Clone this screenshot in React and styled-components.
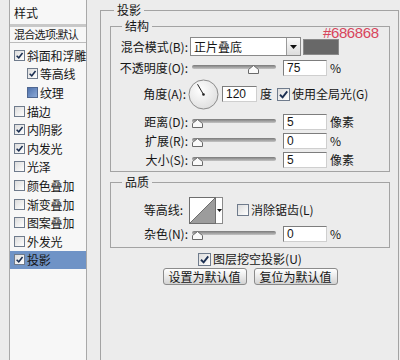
import React from 'react';
import styled, { createGlobalStyle } from 'styled-components';

const GlobalStyle = createGlobalStyle`
  html, body { margin: 0; padding: 0; }
  body {
    background: #ececec;
    font-family: "Noto Sans CJK SC", "Liberation Sans", sans-serif;
    font-size: 12px;
    color: #161616;
  }
`;

const Window = styled.div`
  display: flex;
  width: 400px;
  height: 360px;
  overflow: hidden;
  background: #ececec;
`;

/* ---------- left list ---------- */

const StylePanel = styled.div`
  width: 76px;
  margin-left: 9px;
  flex-shrink: 0;
  background: #f7f7f7;
  border-left: 1px solid #a9a9a9;
  border-right: 1px solid #a9a9a9;
`;

const PanelHeader = styled.div`
  height: 24px;
  line-height: 26px;
  padding-left: 4px;
`;

const HeaderRule = styled.div`
  height: 3px;
  background: #c8c8c8;
`;

const BlendDefault = styled.div`
  height: 15px;
  line-height: 15px;
  padding-left: 4px;
  font-size: 11px;
  letter-spacing: -0.7px;
  white-space: nowrap;
  overflow: hidden;
  border-bottom: 1px solid #bcbcbc;
`;

const StyleList = styled.div`
  padding-top: 3px;
`;

const StyleItem = styled.div`
  display: flex;
  align-items: center;
  gap: 2px;
  height: 18.6px;
  padding-left: ${p => (p.indent ? 17 : 4)}px;
  white-space: nowrap;
  letter-spacing: -0.2px;
  background: ${p => (p.selected ? '#6f93c6' : 'transparent')};
`;

/* ---------- shared bits ---------- */

const Box = styled.span`
  display: inline-flex;
  align-items: center;
  justify-content: center;
  box-sizing: border-box;
  width: ${p => p.size}px;
  height: ${p => p.size}px;
  flex-shrink: 0;
  border: 1px solid ${p => (p.tone ? '#4f6791' : '#6f7b8c')};
  background: ${p =>
    p.tone
      ? 'linear-gradient(135deg, #4f72ad, #8aa8d6)'
      : 'linear-gradient(135deg, #dcdcdc, #ffffff)'};
`;

const CheckBox = ({ checked, tone, size = 11 }) => (
  <Box size={size} tone={tone}>
    {checked && (
      <svg width={size - 2} height={size - 2} viewBox="0 0 10 10">
        <path d="M1.8 5.2 L4.2 7.6 L8.4 2.2" fill="none" stroke="#1b2f52" strokeWidth="1.7" />
      </svg>
    )}
  </Box>
);

/* ---------- right side ---------- */

const Main = styled.div`
  flex: 1;
  margin-left: 13px;
  margin-right: 1px;
  height: 360px;
  overflow: hidden;
`;

const OuterGroup = styled.fieldset`
  margin: 3px 0 0;
  padding: 0 8px 0 9px;
  height: 400px;
  min-width: 0;
  box-sizing: border-box;
  border: 1px solid #a3a3a3;
`;

const Group = styled.fieldset`
  margin: ${p => p.mt || 0}px 0 0;
  padding: 0 0 ${p => p.pb || 3}px;
  min-width: 0;
  border: 1px solid #a3a3a3;
`;

const Legend = styled.legend`
  margin-left: ${p => p.ml}px;
  margin-bottom: ${p => p.mb || 0}px;
  padding: 0 3px;
  line-height: 14px;
  font-size: 12px;
`;

const Row = styled.div`
  display: flex;
  align-items: center;
  height: ${p => p.h}px;
  margin-top: ${p => p.mt || 0}px;
  justify-content: ${p => (p.center ? 'center' : 'flex-start')};
  gap: ${p => p.gap || 0}px;
`;

const Label = styled.span`
  width: ${p => p.w || 79}px;
  padding-right: ${p => p.pr || 2}px;
  box-sizing: border-box;
  text-align: right;
  white-space: nowrap;
  line-height: 14px;
  flex-shrink: 0;
`;

const SelectField = styled.div`
  display: flex;
  width: 111px;
  height: 19px;
  box-sizing: border-box;
  border: 1px solid #8a8a8a;
  background: #fff;
`;

const SelectText = styled.span`
  flex: 1;
  padding-left: 3px;
  line-height: 17px;
`;

const SelectArrow = styled.span`
  width: 13px;
  display: flex;
  align-items: center;
  justify-content: center;
  border-left: 1px solid #9a9a9a;
  background: linear-gradient(#fbfbfb, #dcdcdc);
`;

const Swatch = styled.div`
  position: relative;
  width: 36px;
  height: 16px;
  margin-left: 2px;
  box-sizing: border-box;
  background: #686868;
  border: 1px solid #8a8a8a;
`;

const HexNote = styled.span`
  position: absolute;
  left: 19px;
  top: -15px;
  font-family: "Liberation Sans", sans-serif;
  font-size: 15px;
  line-height: 15px;
  letter-spacing: -0.4px;
  color: #d8465c;
  white-space: nowrap;
`;

const SliderWrap = styled.div`
  position: relative;
  width: 84px;
  height: 14px;
  margin-left: 2px;
  flex-shrink: 0;
`;

const Track = styled.div`
  position: absolute;
  left: 0;
  right: 0;
  top: 4px;
  height: 4px;
  border-radius: 2px;
  background: linear-gradient(#7a7a7a, #c4c4c4);
`;

const Thumb = styled.svg`
  position: absolute;
  top: 4px;
`;

const Slider = ({ value }) => (
  <SliderWrap>
    <Track />
    <Thumb width="11" height="9" viewBox="0 0 11 9" style={{ left: value * 74 }}>
      <path d="M5.5 0.5 L10.5 4.5 L10.5 8.5 L0.5 8.5 L0.5 4.5 Z" fill="#fafafa" stroke="#6a6a6a" />
    </Thumb>
  </SliderWrap>
);

const NumBox = styled.div`
  width: ${p => p.w || 44}px;
  height: 16px;
  margin-left: ${p => p.ml ?? 7}px;
  box-sizing: border-box;
  padding-left: 3px;
  background: #fff;
  border: 1px solid;
  border-color: #7d7d7d #cfcfcf #cfcfcf #7d7d7d;
  font-family: "Liberation Sans", sans-serif;
  font-size: 12px;
  line-height: 14px;
  flex-shrink: 0;
`;

const Unit = styled.span`
  margin-left: ${p => p.ml ?? 3}px;
  white-space: nowrap;
  line-height: 14px;
`;

const Dial = styled.svg`
  flex-shrink: 0;
`;

const ContourPicker = styled.div`
  display: flex;
`;

const ContourPreview = styled.div`
  width: 27px;
  height: 27px;
  box-sizing: border-box;
  border: 1px solid #6e6e6e;
  background: #fff;
`;

const ContourArrow = styled.div`
  width: 7px;
  height: 27px;
  box-sizing: border-box;
  border: 1px solid #8a8a8a;
  border-left: none;
  background: #fff;
  display: flex;
  align-items: center;
  justify-content: center;
`;

const CheckLabel = styled.label`
  display: flex;
  align-items: center;
  gap: 2px;
  margin-left: ${p => p.ml || 0}px;
  white-space: nowrap;
  line-height: 14px;
`;

const Button = styled.button`
  width: 84px;
  height: 17px;
  padding: 0;
  border: 1px solid #8b8b8b;
  border-radius: 3px;
  background: linear-gradient(#ffffff, #e8e8e8 55%, #d3d3d3);
  font-family: "Noto Sans CJK SC", sans-serif;
  font-size: 12px;
  line-height: 15px;
  color: #161616;
`;

const styles = [
  { name: '斜面和浮雕', checked: true },
  { name: '等高线', checked: true, indent: true },
  { name: '纹理', indent: true, tone: true },
  { name: '描边' },
  { name: '内阴影', checked: true },
  { name: '内发光', checked: true },
  { name: '光泽' },
  { name: '颜色叠加' },
  { name: '渐变叠加' },
  { name: '图案叠加' },
  { name: '外发光' },
  { name: '投影', checked: true, selected: true },
];

const SliderRow = ({ label, value, pos, unit, mt = 0, h = 19 }) => (
  <Row h={h} mt={mt}>
    <Label>{label}</Label>
    <Slider value={pos} />
    <NumBox>{value}</NumBox>
    <Unit>{unit}</Unit>
  </Row>
);

export default function App() {
  return (
    <>
      <GlobalStyle />
      <Window>
        <StylePanel>
          <PanelHeader>样式</PanelHeader>
          <HeaderRule />
          <BlendDefault>混合选项:默认</BlendDefault>
          <StyleList>
            {styles.map(s => (
              <StyleItem key={s.name} indent={s.indent} selected={s.selected}>
                <CheckBox checked={s.checked} tone={s.tone} />
                <span>{s.name}</span>
              </StyleItem>
            ))}
          </StyleList>
        </StylePanel>

        <Main>
          <OuterGroup>
            <Legend ml={4} mb={2}>投影</Legend>
            <Group pb={2}>
              <Legend ml={11}>结构</Legend>
              <Row h={19} mt={4}>
                <Label>混合模式(B):</Label>
                <SelectField>
                  <SelectText>正片叠底</SelectText>
                  <SelectArrow>
                    <svg width="7" height="4" viewBox="0 0 7 4">
                      <path d="M0 0 H7 L3.5 4 Z" fill="#111" />
                    </svg>
                  </SelectArrow>
                </SelectField>
                <Swatch>
                  <HexNote>#686868</HexNote>
                </Swatch>
              </Row>
              <SliderRow label="不透明度(O):" value="75" pos={0.75} unit="%" mt={4} h={16} />
              <Row h={32} mt={2}>
                <Label w={77}>角度(A):</Label>
                <Dial width="31" height="31" viewBox="0 0 31 31">
                  <defs>
                    <radialGradient id="dialFill" cx="0.4" cy="0.35" r="0.7">
                      <stop offset="0" stopColor="#ffffff" />
                      <stop offset="1" stopColor="#dedede" />
                    </radialGradient>
                  </defs>
                  <circle cx="15.5" cy="15.5" r="14.5" fill="url(#dialFill)" stroke="#8c8c8c" />
                  <line x1="15.5" y1="15.5" x2="9.5" y2="5.2" stroke="#222" strokeWidth="1" />
                  <circle cx="15.5" cy="15.5" r="1.3" fill="#222" />
                </Dial>
                <NumBox w={35} ml={3}>120</NumBox>
                <Unit>度</Unit>
                <CheckLabel ml={5}>
                  <CheckBox checked size={13} />
                  使用全局光(G)
                </CheckLabel>
              </Row>
              <SliderRow label="距离(D):" value="5" pos={0} unit="像素" mt={2} />
              <SliderRow label="扩展(R):" value="0" pos={0} unit="%" />
              <SliderRow label="大小(S):" value="5" pos={0} unit="像素" />
            </Group>

            <Group mt={3} pb={5}>
              <Legend ml={11}>品质</Legend>
              <Row h={28} mt={7}>
                <Label w={78} pr={6}>等高线:</Label>
                <ContourPicker>
                  <ContourPreview>
                    <svg width="25" height="25" viewBox="0 0 25 25">
                      <path d="M0 25 L25 0 L25 25 Z" fill="#9c9c9c" />
                      <path d="M0 25 L25 0" stroke="#555" strokeWidth="0.8" />
                    </svg>
                  </ContourPreview>
                  <ContourArrow>
                    <svg width="5" height="3" viewBox="0 0 5 3">
                      <path d="M0 0 H5 L2.5 3 Z" fill="#111" />
                    </svg>
                  </ContourArrow>
                </ContourPicker>
                <CheckLabel ml={14}>
                  <CheckBox size={12} />
                  消除锯齿(L)
                </CheckLabel>
              </Row>
              <SliderRow label="杂色(N):" value="0" pos={0} unit="%" mt={1} h={17} />
            </Group>

            <Row h={16} mt={3} center>
              <CheckLabel>
                <CheckBox checked size={13} />
                图层挖空投影(U)
              </CheckLabel>
            </Row>
            <Row h={17} mt={1} center gap={7}>
              <Button>设置为默认值</Button>
              <Button>复位为默认值</Button>
            </Row>
          </OuterGroup>
        </Main>
      </Window>
    </>
  );
}
